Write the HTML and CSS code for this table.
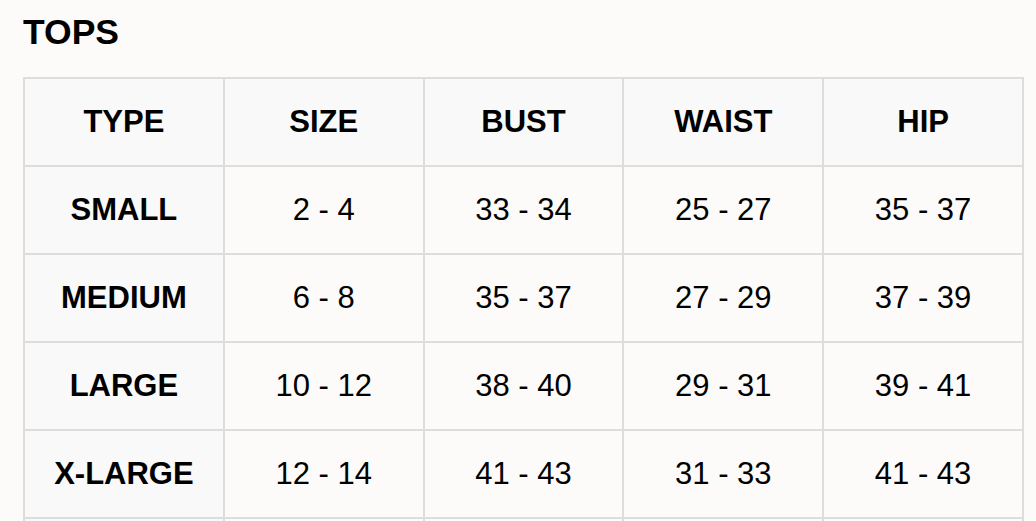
FILE: index.html
```html
<!DOCTYPE html>
<html lang="en">
<head>
<meta charset="utf-8">
<title>Tops size chart</title>
<link rel="stylesheet" href="styles.css">
</head>
<body>
<main class="page">
  <h1 class="title">TOPS</h1>
  <table class="chart">
    <thead>
      <tr><th>TYPE</th><th>SIZE</th><th>BUST</th><th>WAIST</th><th>HIP</th></tr>
    </thead>
    <tbody>
      <tr><th>SMALL</th><td>2 - 4</td><td>33 - 34</td><td>25 - 27</td><td>35 - 37</td></tr>
      <tr><th>MEDIUM</th><td>6 - 8</td><td>35 - 37</td><td>27 - 29</td><td>37 - 39</td></tr>
      <tr><th>LARGE</th><td>10 - 12</td><td>38 - 40</td><td>29 - 31</td><td>39 - 41</td></tr>
      <tr><th>X-LARGE</th><td>12 - 14</td><td>41 - 43</td><td>31 - 33</td><td>41 - 43</td></tr>
      <tr><th></th><td></td><td></td><td></td><td></td></tr>
    </tbody>
  </table>
</main>
</body>
</html>
```
FILE: styles.css
```css
html {
  height: 521px;
  overflow: hidden;
  background: #fcfbfa;
}
body {
  margin: 0;
  font-family: "Liberation Sans", Arial, sans-serif;
  color: #000;
}
.page {
  padding: 13px 0 0 23px;
}
.title {
  margin: 0 0 25px;
  font-size: 35.5px;
  line-height: 39px;
  font-weight: bold;
}
.chart {
  border-collapse: collapse;
  table-layout: fixed;
  width: 1001px;
  font-size: 31px;
}
.chart tr {
  height: 88px;
}
.chart th,
.chart td {
  border: 2px solid #dddddd;
  text-align: center;
  vertical-align: middle;
  padding: 0;
  width: 20%;
}
.chart th {
  font-weight: bold;
  background: #f9f9f9;
}
.chart td {
  font-weight: normal;
}
```
